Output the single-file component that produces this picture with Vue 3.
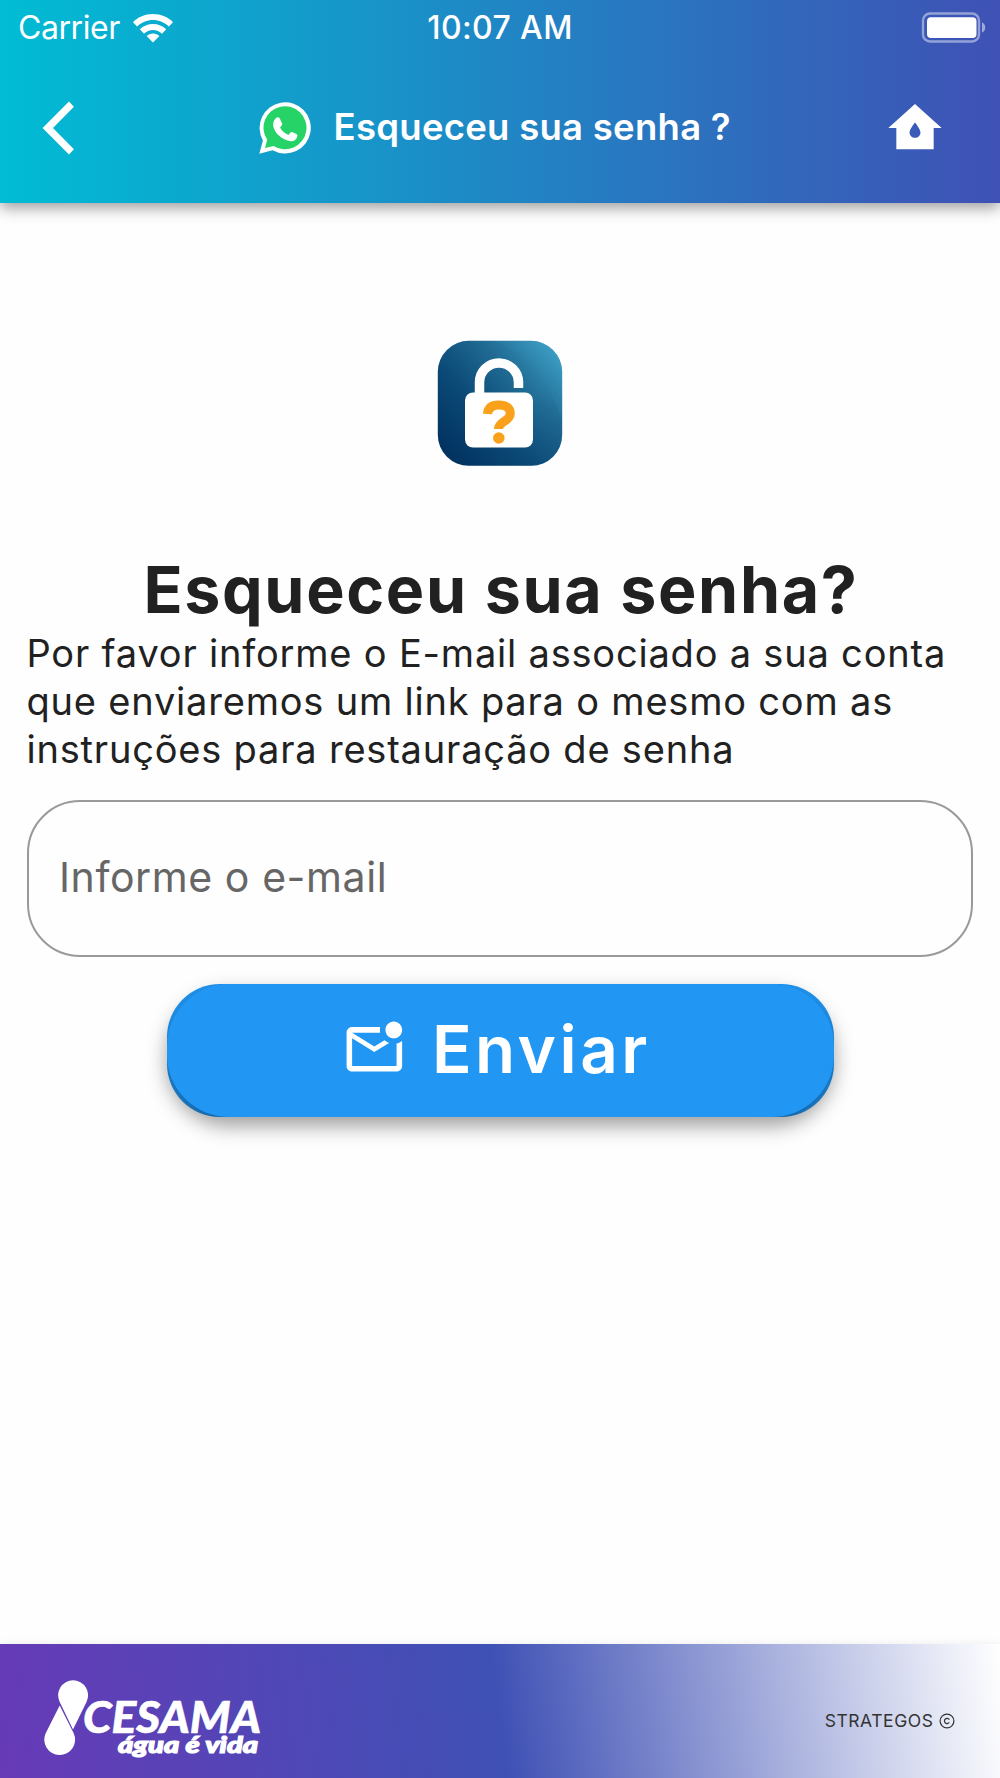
<script setup>
import { ref } from 'vue'

const email = ref('')
</script>

<template>
  <div class="screen">
    <header class="top">
      <div class="status">
        <div class="carrier">
          <span>Carrier</span>
          <svg width="42" height="30" viewBox="0 0 42 30" fill="#fff">
            <path d="M21 1C13 1 6 4 1 9.200l4.100 4.400C9.400 9.400 15 7 21 7s11.600 2.400 15.900 6.600L41 9.200C36 4 29 1 21 1z" />
            <path d="M21 10.900c-5.200 0-9.800 2-13.200 5.400l4.200 4.400c2.400-2.300 5.500-3.700 9-3.700s6.600 1.400 9 3.700l4.200-4.400c-3.400-3.400-8-5.400-13.200-5.400z" />
            <path d="M21 20.600c-2.500 0-4.700.900-6.400 2.400l6.400 6.600 6.400-6.600c-1.700-1.500-3.900-2.400-6.400-2.400z" />
          </svg>
        </div>
        <span class="clock">10:07 AM</span>
        <div class="battery">
          <svg width="65" height="32" viewBox="0 0 65 32">
            <rect x="2" y="1.500" width="56" height="28" rx="7" fill="none" stroke="#fff" stroke-opacity=".45" stroke-width="2.400" />
            <rect x="6" y="5.300" width="49.500" height="20.600" rx="4" fill="#fff" />
            <path d="M61 10.500c2.200.800 3.200 2.600 3.200 5s-1 4.200-3.200 5z" fill="#fff" fill-opacity=".5" />
          </svg>
        </div>
      </div>
      <nav class="bar">
        <svg class="back" width="64" height="64" viewBox="0 0 24 24" fill="#fff">
          <path d="M17.600 4L15.730 2.100 5.840 12l9.900 9.900L17.600 20 9.750 12z" />
        </svg>
        <div class="title">
          <svg width="54" height="54" viewBox="0 0 54 54">
            <path d="M1.300 52.700L4.900 39.500A25.600 25.600 0 1 1 14.600 49.200z" fill="#fff" />
            <path d="M7 47l2.200-8.200a21.500 21.500 0 1 1 6.300 6.100z" fill="#25d366" />
            <path d="M18 17c1-1 2.900-1.100 3.700.2l2.400 5.400c.3.900-.1 1.800-2 3.900 1.800 3.500 4.600 5.900 8.400 7.400 1.500-1.700 2.200-2.900 3.100-2.800.900.100 4.900 2 5.500 2.500.9 1.200-.3 4.400-2.300 5.600-3 1.700-6.700 1-11.400-1.500-4.700-2.600-8.300-6.900-9.700-10.800-1.200-3.600-.4-7.400 2.300-9.900z" fill="#fff" />
          </svg>
          <h2>Esqueceu sua senha ?</h2>
        </div>
        <svg class="home" width="64" height="64" viewBox="0 0 24 24" fill="#fff" fill-rule="evenodd">
          <path d="M12 3L2 12h3v8h14v-8h3zM12 15.700c-1.150 0-2.050-.900-2.050-2C9.950 12.400 12 9.900 12 9.900s2.050 2.500 2.050 3.800c0 1.100-.9 2-2.050 2z" />
        </svg>
      </nav>
    </header>

    <main class="content">
      <svg class="lock" width="126" height="127" viewBox="0 0 126 127">
        <defs>
          <linearGradient id="tile" x1="0.1" y1="0.9" x2="0.95" y2="0.1">
            <stop offset="0" stop-color="#023361" />
            <stop offset=".35" stop-color="#0b4a77" />
            <stop offset=".7" stop-color="#226f98" />
            <stop offset="1" stop-color="#3b9cc2" />
          </linearGradient>
          <linearGradient id="shade" x1="0" y1="0" x2="1" y2="1">
            <stop offset="0" stop-color="#0a3f6c" stop-opacity=".1" />
            <stop offset=".6" stop-color="#0a3f6c" stop-opacity="0" />
            <stop offset="1" stop-color="#083d68" stop-opacity=".25" />
          </linearGradient>
        </defs>
        <rect x=".8" y=".8" width="124.400" height="125" rx="31" fill="url(#tile)" />
        <path d="M32 .800h26c30 12 55 40 67 78v16a31 31 0 0 1-31 31H32A31 31 0 0 1 .800 95V32A31 31 0 0 1 32 .800z" fill="url(#shade)" />
        <path d="M42.500 56V42.500a19.500 19.500 0 0 1 39 0V48" fill="none" stroke="#fff" stroke-width="9.500" />
        <rect x="28" y="52.500" width="68" height="55" rx="8" fill="#fff" />
        <path d="M50.500 74c.5-6 4.500-9 11.500-9s11.300 3 11.300 8.500c0 8-11.800 7.500-11.800 15.500" fill="none" stroke="#f9a11b" stroke-width="9" />
        <circle cx="61.800" cy="98" r="5.800" fill="#f9a11b" />
      </svg>

      <h1>Esqueceu sua senha?</h1>
      <p class="hint">Por favor informe o E-mail associado a sua conta que enviaremos um link para o mesmo com as instruções para restauração de senha</p>

      <input v-model="email" class="field" type="email" placeholder="Informe o e-mail" />

      <button class="send" type="button">
        <span class="face">
          <svg width="66.700" height="66.700" viewBox="0 0 24 24" fill="#fff">
            <path d="M22 8.980V18c0 1.100-.9 2-2 2H4c-1.100 0-2-.9-2-2V6c0-1.100.9-2 2-2h10.100c-.06.320-.1.660-.1 1s.04.680.1 1H4l8 5 3.670-2.290c.47.430 1.020.760 1.630.980L12 13 4 8v10h16V9.900c.74-.15 1.420-.48 2-.92zM16 5c0 1.660 1.340 3 3 3s3-1.340 3-3-1.340-3-3-3-3 1.340-3 3z" />
          </svg>
          <span class="label">Enviar</span>
        </span>
      </button>
    </main>

    <footer class="bottom">
      <svg class="logo" width="230" height="90" viewBox="0 0 230 90" fill="#fff">
        <path d="M33 53.500L19.700 26A15 15 0 1 1 46.500 26z" />
        <path d="M19.700 29.500L33.800 57.500A15.400 15.400 0 1 1 5.800 57z" />
        <text class="brand" x="43" y="57" textLength="178" lengthAdjust="spacingAndGlyphs">CESAMA</text>
        <text class="tagline" x="78" y="77.300" textLength="140" lengthAdjust="spacingAndGlyphs">água é vida</text>
      </svg>
      <span class="credit">STRATEGOS <svg width="16" height="16" viewBox="0 0 16 16" fill="none" stroke="#333" stroke-width="1.200"><circle cx="8" cy="8" r="6.900" /><path d="M10.300 6.700a2.600 2.600 0 1 0 0 2.600" /></svg></span>
    </footer>
  </div>
</template>

<style>
body {
  margin: 0;
  background: #fff;
}
</style>

<style scoped>
.screen {
  display: flex;
  flex-direction: column;
  width: 1000px;
  height: 1778px;
  overflow: hidden;
  background: #fefefe;
  color: #212121;
  font-family: Inter, sans-serif;
}

svg {
  display: block;
  flex: none;
}

.top {
  flex: none;
  height: 203px;
  background: linear-gradient(90deg, #00bcd4, #3f51b5);
  box-shadow: 0 5px 14px rgba(0, 0, 0, 0.38);
  color: #fff;
}

.status {
  display: grid;
  grid-template-columns: 1fr auto 1fr;
  align-items: center;
  height: 53px;
  padding: 0 14px 0 18px;
  font-size: 32px;
  line-height: 56px;
}

.carrier {
  display: flex;
  align-items: center;
  gap: 12px;
  letter-spacing: -0.450px;
}

.clock {
  margin: 0 3px 0 -1px;
  font-weight: 500;
  letter-spacing: 0.400px;
}

.battery {
  display: flex;
  justify-content: flex-end;
}

.bar {
  display: flex;
  align-items: center;
  justify-content: space-between;
  height: 150px;
  padding: 0 53.500px 0 27px;
}

.title {
  display: flex;
  align-items: center;
  gap: 22px;
  margin-left: 15px;
}

.title h2 {
  margin: 0 0 2px;
  font-size: 36.500px;
  font-weight: 600;
  letter-spacing: 0.260px;
  line-height: 44px;
}

.content {
  display: flex;
  flex: 1;
  flex-direction: column;
  align-items: center;
  padding: 137px 27px 0;
}

h1 {
  margin: 85px 0 1px 2px;
  font-size: 64.500px;
  font-weight: 700;
  letter-spacing: 1.650px;
  line-height: 76px;
}

.hint {
  align-self: stretch;
  margin: 0 -10px 0 -0.500px;
  font-size: 38px;
  letter-spacing: 0.800px;
  line-height: 48px;
}

.field {
  box-sizing: border-box;
  align-self: stretch;
  height: 157px;
  margin: 26.500px 0 0;
  padding: 0 30px 2px;
  border: 2.500px solid #999;
  border-radius: 53px;
  outline: none;
  background: transparent;
  color: #212121;
  font: 400 41px Inter, sans-serif;
  letter-spacing: 0.580px;
}

.field::placeholder {
  color: #666;
  opacity: 1;
}

.send {
  width: 667px;
  height: 133px;
  margin: 27px 0 0;
  padding: 0;
  border: 0;
  border-radius: 53px;
  background: #2196f3;
  color: #fff;
  font: 560 65.500px Inter, sans-serif;
}

.face {
  display: flex;
  align-items: center;
  justify-content: center;
  gap: 24px;
  height: 100%;
  box-sizing: border-box;
  padding: 0 8px 1px 0;
  border-radius: 62px;
  background: #2196f3;
  box-shadow: 0 9px 20px rgba(0, 0, 0, 0.38);
}

.label {
  letter-spacing: 3.500px;
}

.bottom {
  display: flex;
  flex: none;
  align-items: center;
  justify-content: space-between;
  height: 134px;
  padding: 0 45.500px 0 40px;
  background: linear-gradient(82.400deg, #673ab7, #3f51b5 50%, #fff);
  box-shadow: 0 0 8px rgba(0, 0, 0, 0.08);
}

.logo {
  margin-top: 20px;
}

.brand {
  font: italic 900 44.500px Lato, sans-serif;
  stroke: #fff;
  stroke-width: 0.600px;
}

.tagline {
  font: italic 900 22px Lato, sans-serif;
  stroke: #fff;
  stroke-width: 1.200px;
}

.credit {
  display: flex;
  align-items: center;
  gap: 5px;
  margin-top: 19px;
  color: #333;
  font-size: 17.500px;
  letter-spacing: 0.550px;
}
</style>
